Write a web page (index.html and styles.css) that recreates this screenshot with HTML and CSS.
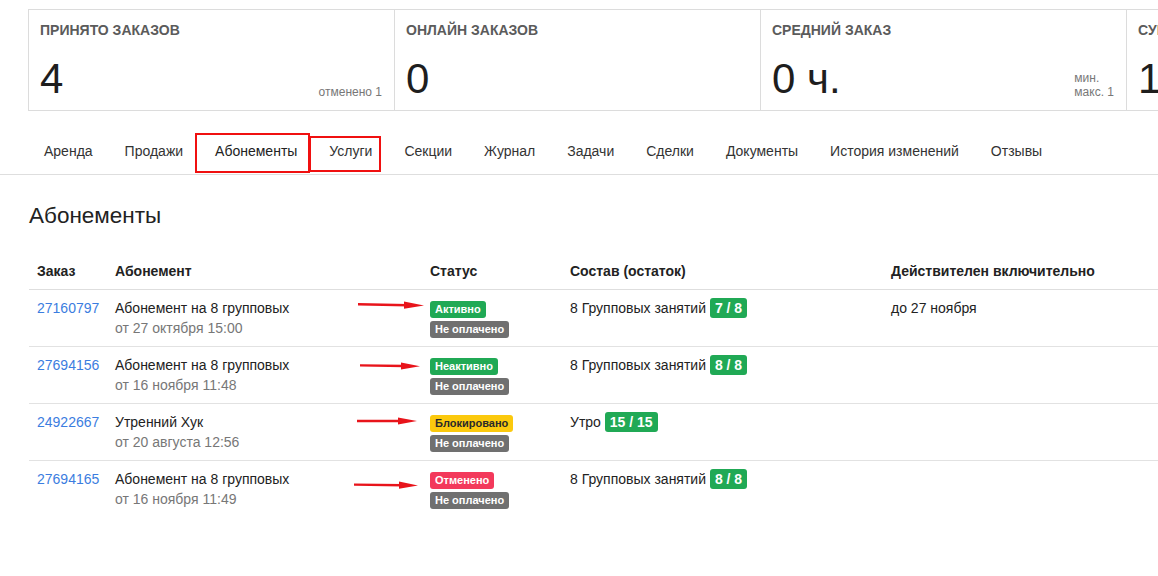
FILE: index.html
```html
<!DOCTYPE html>
<html lang="ru">
<head>
<meta charset="utf-8">
<title>Абонементы</title>
<link rel="stylesheet" href="styles.css">
</head>
<body>
<div class="page">
  <div class="stats">
    <div class="stat">
      <div class="stat-title">Принято заказов</div>
      <div class="stat-body">
        <div class="stat-value">4</div>
        <div class="stat-note">отменено 1</div>
      </div>
    </div>
    <div class="stat">
      <div class="stat-title">Онлайн заказов</div>
      <div class="stat-body">
        <div class="stat-value">0</div>
      </div>
    </div>
    <div class="stat">
      <div class="stat-title">Средний заказ</div>
      <div class="stat-body">
        <div class="stat-value">0 ч.</div>
        <div class="stat-note">мин.<br>макс. 1</div>
      </div>
    </div>
    <div class="stat">
      <div class="stat-title">Сумма заказов</div>
      <div class="stat-body">
        <div class="stat-value">1 200</div>
      </div>
    </div>
  </div>

  <nav class="tabs">
    <a class="tab">Аренда</a>
    <a class="tab">Продажи</a>
    <a class="tab tab-active">Абонементы<span class="mark mark-a"></span></a>
    <a class="tab">Услуги<span class="mark mark-b"></span></a>
    <a class="tab">Секции</a>
    <a class="tab">Журнал</a>
    <a class="tab">Задачи</a>
    <a class="tab">Сделки</a>
    <a class="tab">Документы</a>
    <a class="tab">История изменений</a>
    <a class="tab">Отзывы</a>
  </nav>

  <section class="content">
    <h1 class="heading">Абонементы</h1>
    <table class="grid">
      <colgroup>
        <col class="c1"><col class="c2"><col class="c3"><col class="c4"><col class="c5">
      </colgroup>
      <thead>
        <tr>
          <th>Заказ</th>
          <th>Абонемент</th>
          <th>Статус</th>
          <th>Состав (остаток)</th>
          <th>Действителен включительно</th>
        </tr>
      </thead>
      <tbody>
        <tr>
          <td><a class="link">27160797</a></td>
          <td>Абонемент на 8 групповых<div class="muted">от 27 октября 15:00</div></td>
          <td class="status">
            <svg class="arrow arrow-1" width="66" height="10" viewBox="0 0 66 10"><path d="M0 4.2 L50 5.2" stroke="#e8141b" stroke-width="2.4" fill="none"/><path d="M46 1.5 L66 5.6 L46 8.8 Z" fill="#e8141b"/></svg>
            <span class="badge b-green">Активно</span>
            <span class="badge b-gray">Не оплачено</span>
          </td>
          <td>8 Групповых занятий <span class="count">7 / 8</span></td>
          <td>до 27 ноября</td>
        </tr>
        <tr>
          <td><a class="link">27694156</a></td>
          <td>Абонемент на 8 групповых<div class="muted">от 16 ноября 11:48</div></td>
          <td class="status">
            <svg class="arrow arrow-2" width="60" height="10" viewBox="0 0 60 10"><path d="M0 4.4 L44 5" stroke="#e8141b" stroke-width="2.4" fill="none"/><path d="M41 1.5 L60 5.2 L41 8.6 Z" fill="#e8141b"/></svg>
            <span class="badge b-green">Неактивно</span>
            <span class="badge b-gray">Не оплачено</span>
          </td>
          <td>8 Групповых занятий <span class="count">8 / 8</span></td>
          <td></td>
        </tr>
        <tr>
          <td><a class="link">24922667</a></td>
          <td>Утренний Хук<div class="muted">от 20 августа 12:56</div></td>
          <td class="status">
            <svg class="arrow arrow-3" width="60" height="10" viewBox="0 0 60 10"><path d="M0 5 L44 5" stroke="#e8141b" stroke-width="2.4" fill="none"/><path d="M41 1.4 L60 5 L41 8.6 Z" fill="#e8141b"/></svg>
            <span class="badge b-yellow">Блокировано</span>
            <span class="badge b-gray">Не оплачено</span>
          </td>
          <td>Утро <span class="count">15 / 15</span></td>
          <td></td>
        </tr>
        <tr>
          <td><a class="link">27694165</a></td>
          <td>Абонемент на 8 групповых<div class="muted">от 16 ноября 11:49</div></td>
          <td class="status">
            <svg class="arrow arrow-4" width="64" height="10" viewBox="0 0 64 10"><path d="M0 4.6 L48 5.2" stroke="#e8141b" stroke-width="2.4" fill="none"/><path d="M45 1.5 L64 5.4 L45 8.8 Z" fill="#e8141b"/></svg>
            <span class="badge b-red">Отменено</span>
            <span class="badge b-gray">Не оплачено</span>
          </td>
          <td>8 Групповых занятий <span class="count">8 / 8</span></td>
          <td></td>
        </tr>
      </tbody>
    </table>
  </section>
</div>
</body>
</html>
```

FILE: styles.css
```css
html, body {
  margin: 0;
  padding: 0;
  overflow: hidden;
  background: #fff;
}
body {
  font-family: "Liberation Sans", Arial, sans-serif;
  font-size: 14px;
  line-height: 20px;
  color: #222;
}
.page {
  width: 1600px;
  padding-top: 9px;
}

/* stat cards */
.stats {
  display: grid;
  grid-template-columns: repeat(4, 366px);
  margin-left: 28px;
  border-top: 1px solid #dcdcdc;
  border-bottom: 1px solid #dcdcdc;
  border-left: 1px solid #dcdcdc;
  width: max-content;
}
.stat {
  padding: 10px 12px 10px 11px;
  border-right: 1px solid #dcdcdc;
  box-sizing: border-box;
}
.stat-title {
  font-size: 14px;
  font-weight: bold;
  text-transform: uppercase;
  color: #5b5b5b;
  line-height: 20px;
}
.stat-body {
  display: flex;
  justify-content: space-between;
  align-items: flex-end;
  margin-top: 18px;
}
.stat-value {
  font-size: 42px;
  line-height: 42px;
  color: #1e1e1e;
}
.stat-note {
  font-size: 12px;
  line-height: 14px;
  color: #777;
  margin-bottom: 1px;
}

/* tabs */
.tabs {
  display: flex;
  margin-top: 23px;
  padding-left: 28px;
  border-bottom: 1px solid #dedede;
}
.tab {
  position: relative;
  padding: 7px 16px 12px;
  font-size: 14px;
  line-height: 21px;
  color: #333;
  white-space: nowrap;
}
.tab-active {
  color: #222;
}
.mark {
  position: absolute;
  border: 2.5px solid #f01010;
  box-sizing: border-box;
}
.mark-a {
  left: -4px;
  top: -1px;
  width: 115px;
  height: 40px;
}
.mark-b {
  left: -4px;
  top: 2px;
  width: 72px;
  height: 36px;
}

/* content */
.content {
  padding-left: 29px;
}
.heading {
  margin: 28px 0 24px;
  font-size: 22.5px;
  line-height: 26px;
  font-weight: normal;
  color: #222;
}
.grid {
  border-collapse: collapse;
  table-layout: fixed;
  width: 1160px;
}
.c1 { width: 78px; }
.c2 { width: 315px; }
.c3 { width: 140px; }
.c4 { width: 321px; }
.c5 { width: 306px; }
.grid th {
  text-align: left;
  font-size: 14px;
  font-weight: bold;
  color: #222;
  padding: 8px 8px;
  line-height: 20px;
  border-bottom: 1px solid #dedede;
  white-space: nowrap;
}
.grid td {
  vertical-align: top;
  padding: 8px 8px;
  line-height: 20px;
  color: #222;
  border-bottom: 1px solid #e2e2e2;
}
.grid tbody tr:last-child td {
  border-bottom: none;
}
.link {
  color: #3b7de0;
}
.muted {
  color: #777;
}
.status {
  position: relative;
}
.badge {
  display: block;
  width: fit-content;
  font-size: 11px;
  font-weight: bold;
  line-height: 13px;
  padding: 2px 5px;
  border-radius: 3px;
  color: #fff;
  margin-top: 3px;
  white-space: nowrap;
}
.b-green { background: #20a955; }
.b-gray { background: #707070; }
.b-yellow { background: #fbc90d; color: #2a2a2a; }
.b-red { background: #f3395b; }
.count {
  display: inline-block;
  background: #20a955;
  color: #fff;
  font-weight: bold;
  font-size: 14px;
  line-height: 16px;
  padding: 2px 5px;
  border-radius: 3px;
  vertical-align: 0;
}

/* annotation arrows */
.arrow {
  position: absolute;
}
.arrow-1 { left: -64px; top: 10px; }
.arrow-2 { left: -62px; top: 14px; }
.arrow-3 { left: -65px; top: 12px; }
.arrow-4 { left: -68px; top: 19px; }
```
